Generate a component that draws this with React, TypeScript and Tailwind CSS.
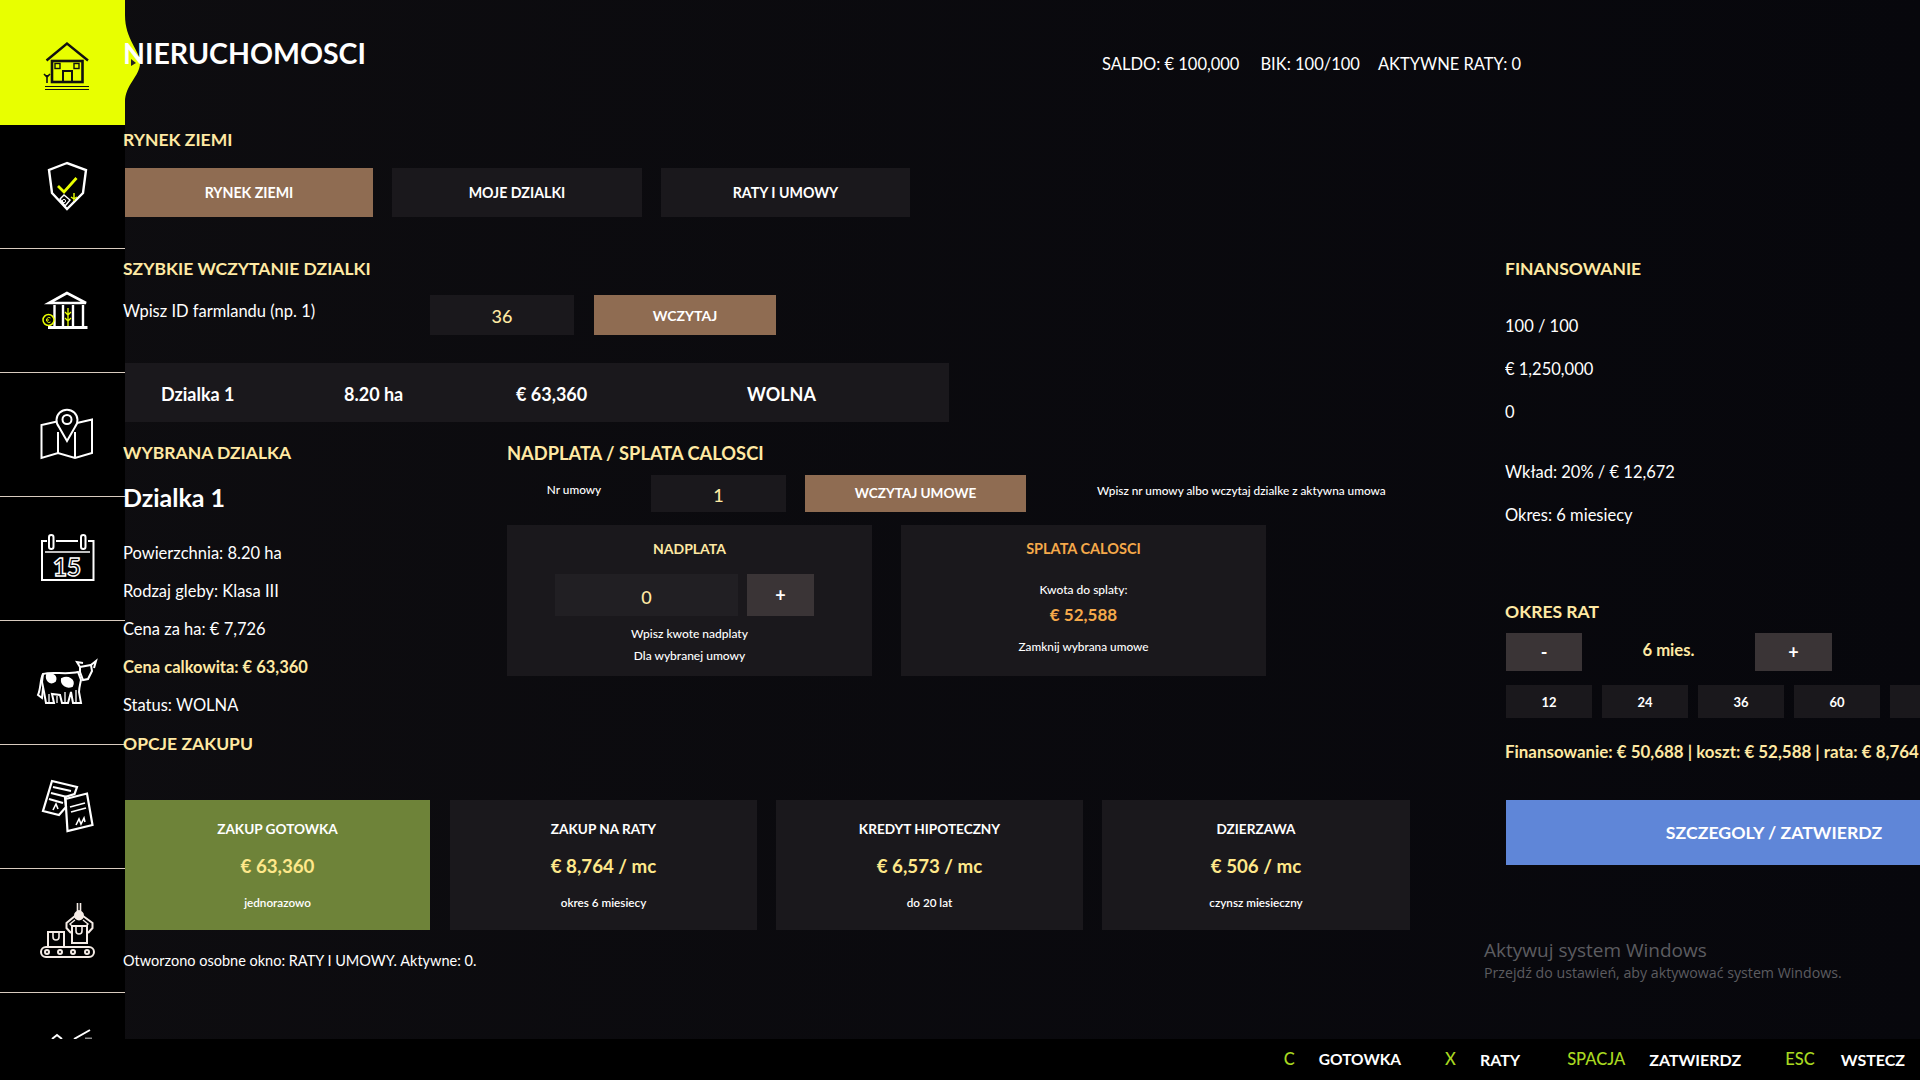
import React from 'react';

const font = "font-['Lato','Noto_Sans',sans-serif]";

const Heading = ({ children, className = '' }: { children: React.ReactNode; className?: string }) => (
  <div className={`h-[22px] pt-[2px] flex items-center text-[17.5px] leading-none font-bold text-[#ffe9a3] whitespace-nowrap ${className}`}>
    {children}
  </div>
);

const Line = ({ children, className = '' }: { children: React.ReactNode; className?: string }) => (
  <div className={`h-[22px] pt-[2px] flex items-center text-[16.5px] leading-none text-white whitespace-nowrap ${className}`}>
    {children}
  </div>
);

const HomeIcon = () => (
  <svg viewBox="0 0 125 124" className="w-[125px] h-[124px]" fill="none" stroke="#111" strokeWidth="2">
    <path d="M46.5 60.5 L67 43.5 L88 60.5" strokeWidth="2.4" />
    <rect x="52" y="61" width="30.5" height="21" strokeWidth="2.6" />
    <rect x="55" y="63.5" width="5" height="5" strokeWidth="1.4" />
    <rect x="74" y="63.5" width="5" height="5" strokeWidth="1.4" />
    <path d="M63 82 V71 H72 V82" strokeWidth="2" />
    <path d="M45 86.5 H89 M45 89.5 H89" strokeWidth="1.2" />
    <path d="M47 83 V75 M44 74 L47 77 L50 74" strokeWidth="1.6" />
  </svg>
);

const ShieldIcon = () => (
  <svg viewBox="0 125 125 124" className="w-[125px] h-[124px]" fill="none" stroke="#fff" strokeWidth="2">
    <path d="M67 163 L49 170 L52 193 L67 209 L83 193 L86 170 Z" strokeWidth="2.4" />
    <path d="M58 186 L64 192 L76.5 178" stroke="#eaff00" strokeWidth="2.8" />
    <path d="M60 199 L64 195 L70 200 L65 206 Z" strokeWidth="1.4" />
    <circle cx="64" cy="201" r="1.6" strokeWidth="1" />
    <path d="M74 193 V201 M71 197 L74 199 L77 197" stroke="#eaff00" strokeWidth="1.4" />
  </svg>
);

const BankIcon = () => (
  <svg viewBox="0 249 125 124" className="w-[125px] h-[124px]" fill="none" stroke="#fff" strokeWidth="2">
    <path d="M67 293 L49 303 H86 Z" strokeWidth="2.6" />
    <path d="M54.5 305 V326 M63 305 V326 M73 305 V326 M83 305 V326" strokeWidth="2.4" />
    <path d="M48 327.5 H87.5" strokeWidth="2.8" />
    <path d="M68 308 V326 M65 312 L68 315 L71 312 M65 318 L68 321 L71 318" stroke="#eaff00" strokeWidth="1.3" />
    <circle cx="48.5" cy="320" r="5.5" fill="#000" stroke="#eaff00" strokeWidth="1.5" />
    <path d="M50.5 318 A2.5 2.5 0 1 0 50.5 322 M46 320 H49" stroke="#eaff00" strokeWidth="1" />
  </svg>
);

const MapIcon = () => (
  <svg viewBox="0 373 125 124" className="w-[125px] h-[124px]" fill="none" stroke="#fff" strokeWidth="2">
    <path d="M57 421.5 L41.5 425 V458 L58 453 L75 458 L92 453 V419.5 L77 423" />
    <path d="M58 432 V453 M75 432 V458" />
    <path d="M59 427 L67 441 L75 427 A10.5 10.5 0 1 0 59 427 Z" />
    <circle cx="67" cy="419.5" r="4.5" />
  </svg>
);

const CalendarIcon = () => (
  <svg viewBox="0 497 125 124" className="w-[125px] h-[124px]" fill="none" stroke="#fff" strokeWidth="2">
    <path d="M47 541 H42 V580 H93.5 V541 H88 M56 541 H78" />
    <rect x="49" y="535" width="4.5" height="14" rx="2.2" />
    <rect x="81" y="535" width="4.5" height="14" rx="2.2" />
    <path d="M45 552 H90" strokeWidth="1.4" />
    <text x="67" y="576" textAnchor="middle" fontSize="24" fontWeight="900" fontFamily="'Lato',sans-serif" fill="#000" stroke="#fff" strokeWidth="1.4">15</text>
  </svg>
);

const CowIcon = () => (
  <svg viewBox="0 621 125 124" className="w-[125px] h-[124px]" fill="none" stroke="#fff" strokeWidth="2">
    <path d="M43 674 C52 671 66 675 78 672 L81 680 C80 685 79 688 79 692 L81 703 H73 L71 692 L68 703 H62 L60 695 L52 694 L54 703 H46 L44 692 L42 682 Z" />
    <path d="M43 674 C40 680 41 688 38 695 L42 698 L43 688" />
    <path d="M80 667 L91 665 L92 671 L88 679 L83 680 L80 672 Z" />
    <path d="M80 667 L77 662 L83 663 M91 665 L96 661 L94 668" />
    <path d="M47 675 C52 673 57 676 55 681 C50 685 46 680 47 675 Z" fill="#fff" />
    <path d="M62 679 C68 676 75 680 72 686 C67 688 61 685 62 679 Z" fill="#fff" />
    <path d="M65 692 V703 M76 690 V703 M49 694 V703 M57 696 V703" strokeWidth="1.3" />
  </svg>
);

const DocsIcon = () => (
  <svg viewBox="0 745 125 124" className="w-[125px] h-[124px]" fill="none" stroke="#fff" strokeWidth="2.2">
    <path d="M52 781 L77 787 L74.5 794 L65 797 L66 807 L59 815 L43 811 Z" />
    <path d="M53 787 L71 791 M51 793 L67 797 M49 799 L63 803" strokeWidth="2" />
    <path d="M65.5 799 L87 793.5 L92.5 825 L67.5 831 Z" />
    <path d="M70 807 L85 803 M71 812 L86 808" strokeWidth="1.8" />
    <path d="M76 825 L79 819 L81 824 L84 818 L85 822" strokeWidth="1.6" />
    <path d="M53 810 L56 804 L58 809" strokeWidth="1.6" />
  </svg>
);

const RobotIcon = () => (
  <svg viewBox="0 869 125 124" className="w-[125px] h-[124px]" fill="none" stroke="#f5ece6" strokeWidth="2">
    <rect x="41" y="947" width="53" height="10" rx="5" />
    <circle cx="47" cy="952" r="2" />
    <circle cx="60" cy="952" r="2" />
    <circle cx="73" cy="952" r="2" />
    <circle cx="87" cy="952" r="2" />
    <path d="M48 946 V932 H64 V946" />
    <path d="M53 933 V937 A3 3 0 0 0 59 937 V933" strokeWidth="1.6" />
    <path d="M72 943 V926 H87 V943 Z" />
    <path d="M76 927 V931 A3 3 0 0 0 82 931 V927" strokeWidth="1.6" />
    <path d="M77.5 903 V911 H80.5 V903" strokeWidth="1.6" />
    <circle cx="79" cy="915.5" r="4" fill="#f5ece6" />
    <path d="M75 916 L66.5 923 V928 L71 933 M83 916 L92.5 923 V928 L88 933" strokeWidth="2" />
    <path d="M75 920 L70 924 L72 926 M83 920 L88 924 L86 926" strokeWidth="1.4" />
  </svg>
);

const ChartIcon = () => (
  <svg viewBox="0 993 125 46" className="w-[125px] h-[46px]" fill="none" stroke="#fff" strokeWidth="2">
    <path d="M52 1039 L57 1035 L62 1039 M74 1039 L90 1030" />
    <path d="M85 1038.5 H92" stroke="#888" />
  </svg>
);

const icons = [ShieldIcon, BankIcon, MapIcon, CalendarIcon, CowIcon, DocsIcon, RobotIcon];

const Sidebar = () => (
  <div className="relative w-[125px] shrink-0 h-full bg-black">
    <div className="relative h-[125px] bg-[#e8ff00]">
      <HomeIcon />
      {/* the tab's bulge towards the title */}
      <svg viewBox="0 0 20 124" className="absolute left-full top-0 w-[20px] h-[124px]">
        <path d="M0 15 C0 40 15 50 15 63 C15 76 0 85 0 102 Z" fill="#e8ff00" />
        <path d="M6 59 L11 63 L6 66 Z" fill="#222" />
      </svg>
    </div>
    {icons.map((Icon, i) => (
      <div key={i} className="h-[124px] border-b border-[#d9cbbf]">
        <Icon />
      </div>
    ))}
    <div className="h-[46px] overflow-hidden">
      <ChartIcon />
    </div>
  </div>
);

const tabs = [
  { label: 'RYNEK ZIEMI', cls: 'w-[248px] bg-[#8f6c52]' },
  { label: 'MOJE DZIALKI', cls: 'w-[250px] bg-[#1a181c]' },
  { label: 'RATY I UMOWY', cls: 'w-[249px] bg-[#1a181c]' }
];

const options = [
  { title: 'ZAKUP GOTOWKA', value: '€ 63,360', note: 'jednorazowo', cls: 'w-[305px] bg-[#6e8339]' },
  { title: 'ZAKUP NA RATY', value: '€ 8,764 / mc', note: 'okres 6 miesiecy', cls: 'ml-[20px] w-[307px] bg-[#1a181c]' },
  { title: 'KREDYT HIPOTECZNY', value: '€ 6,573 / mc', note: 'do 20 lat', cls: 'ml-[19px] w-[307px] bg-[#1a181c]' },
  { title: 'DZIERZAWA', value: '€ 506 / mc', note: 'czynsz miesieczny', cls: 'ml-[19px] w-[308px] bg-[#1a181c]' }
];

const LeftColumn = () => (
  <div className="w-[1382px] shrink-0">
    <div className="h-[106px] flex items-center">
      <h1 className="w-[979px] shrink-0 text-[28.5px] leading-none font-bold text-white">NIERUCHOMOSCI</h1>
      <div className="flex shrink-0 mt-[22px] text-[16.5px] text-white whitespace-nowrap">
        <span>SALDO: € 100,000</span>
        <span className="ml-[21px]">BIK: 100/100</span>
        <span className="ml-[18px]">AKTYWNE RATY: 0</span>
      </div>
    </div>

    <Heading className="mt-[22px]">RYNEK ZIEMI</Heading>
    <div className="mt-[18px] ml-[2px] flex gap-[19px]">
      {tabs.map(t => (
        <div key={t.label} className={`h-[49px] flex items-center justify-center text-[14.2px] font-bold text-white ${t.cls}`}>
          {t.label}
        </div>
      ))}
    </div>

    <Heading className="mt-[40px]">SZYBKIE WCZYTANIE DZIALKI</Heading>
    <div className="mt-[16px] h-[40px] flex">
      <div className="w-[307px] pb-[7px] flex items-center text-[16.5px] text-white">Wpisz ID farmlandu (np. 1)</div>
      <div className="w-[144px] pt-[3px] bg-[#1a181c] flex items-center justify-center text-[18px] font-medium text-[#ffe9a3]">36</div>
      <div className="ml-[20px] w-[182px] bg-[#8f6c52] flex items-center justify-center text-[14px] font-bold text-white">WCZYTAJ</div>
    </div>

    <div className="mt-[28px] ml-[2px] pt-[4px] w-[824px] h-[59px] bg-[#1a181c] flex items-center text-[18px] font-bold text-white whitespace-nowrap">
      <span className="ml-[36px] w-[183px]">Dzialka 1</span>
      <span className="w-[172px]">8.20 ha</span>
      <span className="w-[231px]">€ 63,360</span>
      <span>WOLNA</span>
    </div>

    <div className="flex h-[333px]">
      <div className="w-[384px]">
        <Heading className="mt-[19px]">WYBRANA DZIALKA</Heading>
        <div className="mt-[18px] h-[34px] flex items-center text-[25px] font-bold text-white">Dzialka 1</div>
        <div className="mt-[18px]">
          <Line className="h-[38px]">Powierzchnia: 8.20 ha</Line>
          <Line className="h-[38px]">Rodzaj gleby: Klasa III</Line>
          <Line className="h-[38px]">Cena za ha: € 7,726</Line>
          <Line className="h-[38px] !text-[#ffe9a3] font-bold">Cena calkowita: € 63,360</Line>
          <Line className="h-[38px]">Status: WOLNA</Line>
        </div>
        <Heading className="mt-[9px]">OPCJE ZAKUPU</Heading>
      </div>

      <div>
        <Heading className="mt-[19px] !text-[18.3px]">NADPLATA / SPLATA CALOSCI</Heading>
        <div className="mt-[12px] h-[37px] flex whitespace-nowrap">
          <div className="w-[134px] pb-[8px] flex items-center justify-center text-[11.8px] font-medium text-white">Nr umowy</div>
          <div className="ml-[10px] w-[135px] pt-[4px] bg-[#1a181c] flex items-center justify-center text-[18px] font-medium text-[#ffe9a3]">1</div>
          <div className="ml-[19px] w-[221px] bg-[#8f6c52] flex items-center justify-center text-[13.6px] font-bold text-white">WCZYTAJ UMOWE</div>
          <div className="ml-[71px] pb-[6px] flex items-center text-[11.8px] font-medium text-white">Wpisz nr umowy albo wczytaj dzialke z aktywna umowa</div>
        </div>
        <div className="mt-[13px] flex gap-[29px]">
          <div className="w-[365px] h-[151px] bg-[#1a181c] flex flex-col items-center">
            <div className="mt-[13px] h-[20px] flex items-center text-[14px] font-bold text-[#ffe9a3]">NADPLATA</div>
            <div className="mt-[16px] self-start ml-[48px] flex gap-[9px]">
              <div className="w-[183px] h-[42px] pt-[4px] bg-[#211f23] flex items-center justify-center text-[18px] font-medium text-[#ffe9a3]">0</div>
              <div className="w-[67px] h-[42px] bg-[#3a3436] flex items-center justify-center text-[18px] font-bold text-white">+</div>
            </div>
            <div className="mt-[7px] h-[22px] flex items-center text-[12px] font-medium text-white">Wpisz kwote nadplaty</div>
            <div className="h-[22px] flex items-center text-[12px] font-medium text-white">Dla wybranej umowy</div>
          </div>
          <div className="w-[365px] h-[151px] bg-[#1a181c] flex flex-col items-center">
            <div className="mt-[14px] h-[20px] flex items-center text-[14.5px] font-bold text-[#f5a94a]">SPLATA CALOSCI</div>
            <div className="mt-[21px] h-[20px] flex items-center text-[12px] font-medium text-white">Kwota do splaty:</div>
            <div className="mt-[5px] h-[20px] flex items-center text-[17px] font-bold text-[#f5a94a]">€ 52,588</div>
            <div className="mt-[12px] h-[20px] flex items-center text-[11.8px] font-medium text-white">Zamknij wybrana umowe</div>
          </div>
        </div>
      </div>
    </div>

    <div className="mt-[45px] ml-[2px] flex">
      {options.map(o => (
        <div key={o.title} className={`h-[130px] flex flex-col items-center ${o.cls}`}>
          <div className="mt-[19px] h-[20px] flex items-center text-[13.6px] font-bold text-white">{o.title}</div>
          <div className="mt-[15px] h-[24px] flex items-center text-[18.7px] font-bold text-[#ffe88a]">{o.value}</div>
          <div className="mt-[15px] h-[20px] flex items-center text-[11.7px] font-semibold text-white">{o.note}</div>
        </div>
      ))}
    </div>
    <Line className="mt-[19px] !text-[14.5px]">Otworzono osobne okno: RATY I UMOWY. Aktywne: 0.</Line>
  </div>
);

const RightColumn = () => (
  <div className="w-[415px] overflow-hidden shrink-0 pt-[257px]">
    <Heading>FINANSOWANIE</Heading>
    <Line className="mt-[35px]">100 / 100</Line>
    <Line className="mt-[21px]">€ 1,250,000</Line>
    <Line className="mt-[21px]">0</Line>
    <Line className="mt-[38px]">Wkład: 20% / € 12,672</Line>
    <Line className="mt-[21px]">Okres: 6 miesiecy</Line>
    <Heading className="mt-[75px]">OKRES RAT</Heading>
    <div className="mt-[11px] ml-px flex h-[38px] items-center text-white">
      <div className="w-[76px] h-[38px] bg-[#3a3436] flex items-center justify-center text-[18px] font-bold">-</div>
      <div className="w-[173px] pb-[3px] text-center text-[16.7px] font-bold text-[#ffe9a3]">6 mies.</div>
      <div className="w-[77px] h-[38px] bg-[#3a3436] flex items-center justify-center text-[18px] font-bold">+</div>
    </div>
    <div className="mt-[14px] ml-px flex gap-[10px]">
      {['12', '24', '36', '60', ''].map((n, i) => (
        <div key={i} className="w-[86px] h-[33px] pt-[2px] shrink-0 bg-[#1a181c] flex items-center justify-center text-[13px] font-bold text-white">{n}</div>
      ))}
    </div>
    <div className="mt-[23px] h-[22px] flex items-center text-[16.9px] font-bold text-[#ffe9a3] whitespace-nowrap">
      Finansowanie: € 50,688 | koszt: € 52,588 | rata: € 8,764
    </div>
    <div className="mt-[37px] ml-px pt-[2px] w-[536px] h-[65px] bg-[#5f86d8] flex items-center justify-center text-[17.7px] font-bold text-white">
      SZCZEGOLY / ZATWIERDZ
    </div>
  </div>
);

const hints = [
  { key: 'C', label: 'GOTOWKA', keyClass: '', labelClass: 'ml-[24px] text-[15.5px]' },
  { key: 'X', label: 'RATY', keyClass: 'ml-[44px]', labelClass: 'ml-[24px]' },
  { key: 'SPACJA', label: 'ZATWIERDZ', keyClass: 'ml-[47px]', labelClass: 'ml-[24px]' },
  { key: 'ESC', label: 'WSTECZ', keyClass: 'ml-[44px]', labelClass: 'ml-[26px]' }
];

const App = () => {
  return (
    <div className={`relative w-[1920px] h-[1080px] overflow-hidden bg-black flex flex-col ${font}`}>
      <div className="h-[1039px] flex overflow-hidden bg-gradient-to-r from-[#0e0d10] to-[#07070c]">
        <Sidebar />
        <div className="relative z-10 flex-1 flex -ml-[2px]">
          <LeftColumn />
          <RightColumn />
        </div>
      </div>

      {/* windows activation watermark */}
      <div className="absolute left-[1484px] top-[937px] font-['Open_Sans',sans-serif] text-[#5c5c60] whitespace-nowrap">
        <div className="h-[26px] flex items-center text-[19px]">Aktywuj system Windows</div>
        <div className="h-[18px] pt-[1px] flex items-center text-[14.2px]">Przejdź do ustawień, aby aktywować system Windows.</div>
      </div>

      <div className="h-[41px] flex items-center justify-end pr-[15px] bg-black text-[16px] font-bold whitespace-nowrap">
        {hints.map(h => (
          <React.Fragment key={h.key}>
            <span className={`text-[16.5px] font-medium text-[#a8d820] ${h.keyClass}`}>{h.key}</span>
            <span className={`text-white ${h.labelClass}`}>{h.label}</span>
          </React.Fragment>
        ))}
      </div>
    </div>
  );
};

export default App;
